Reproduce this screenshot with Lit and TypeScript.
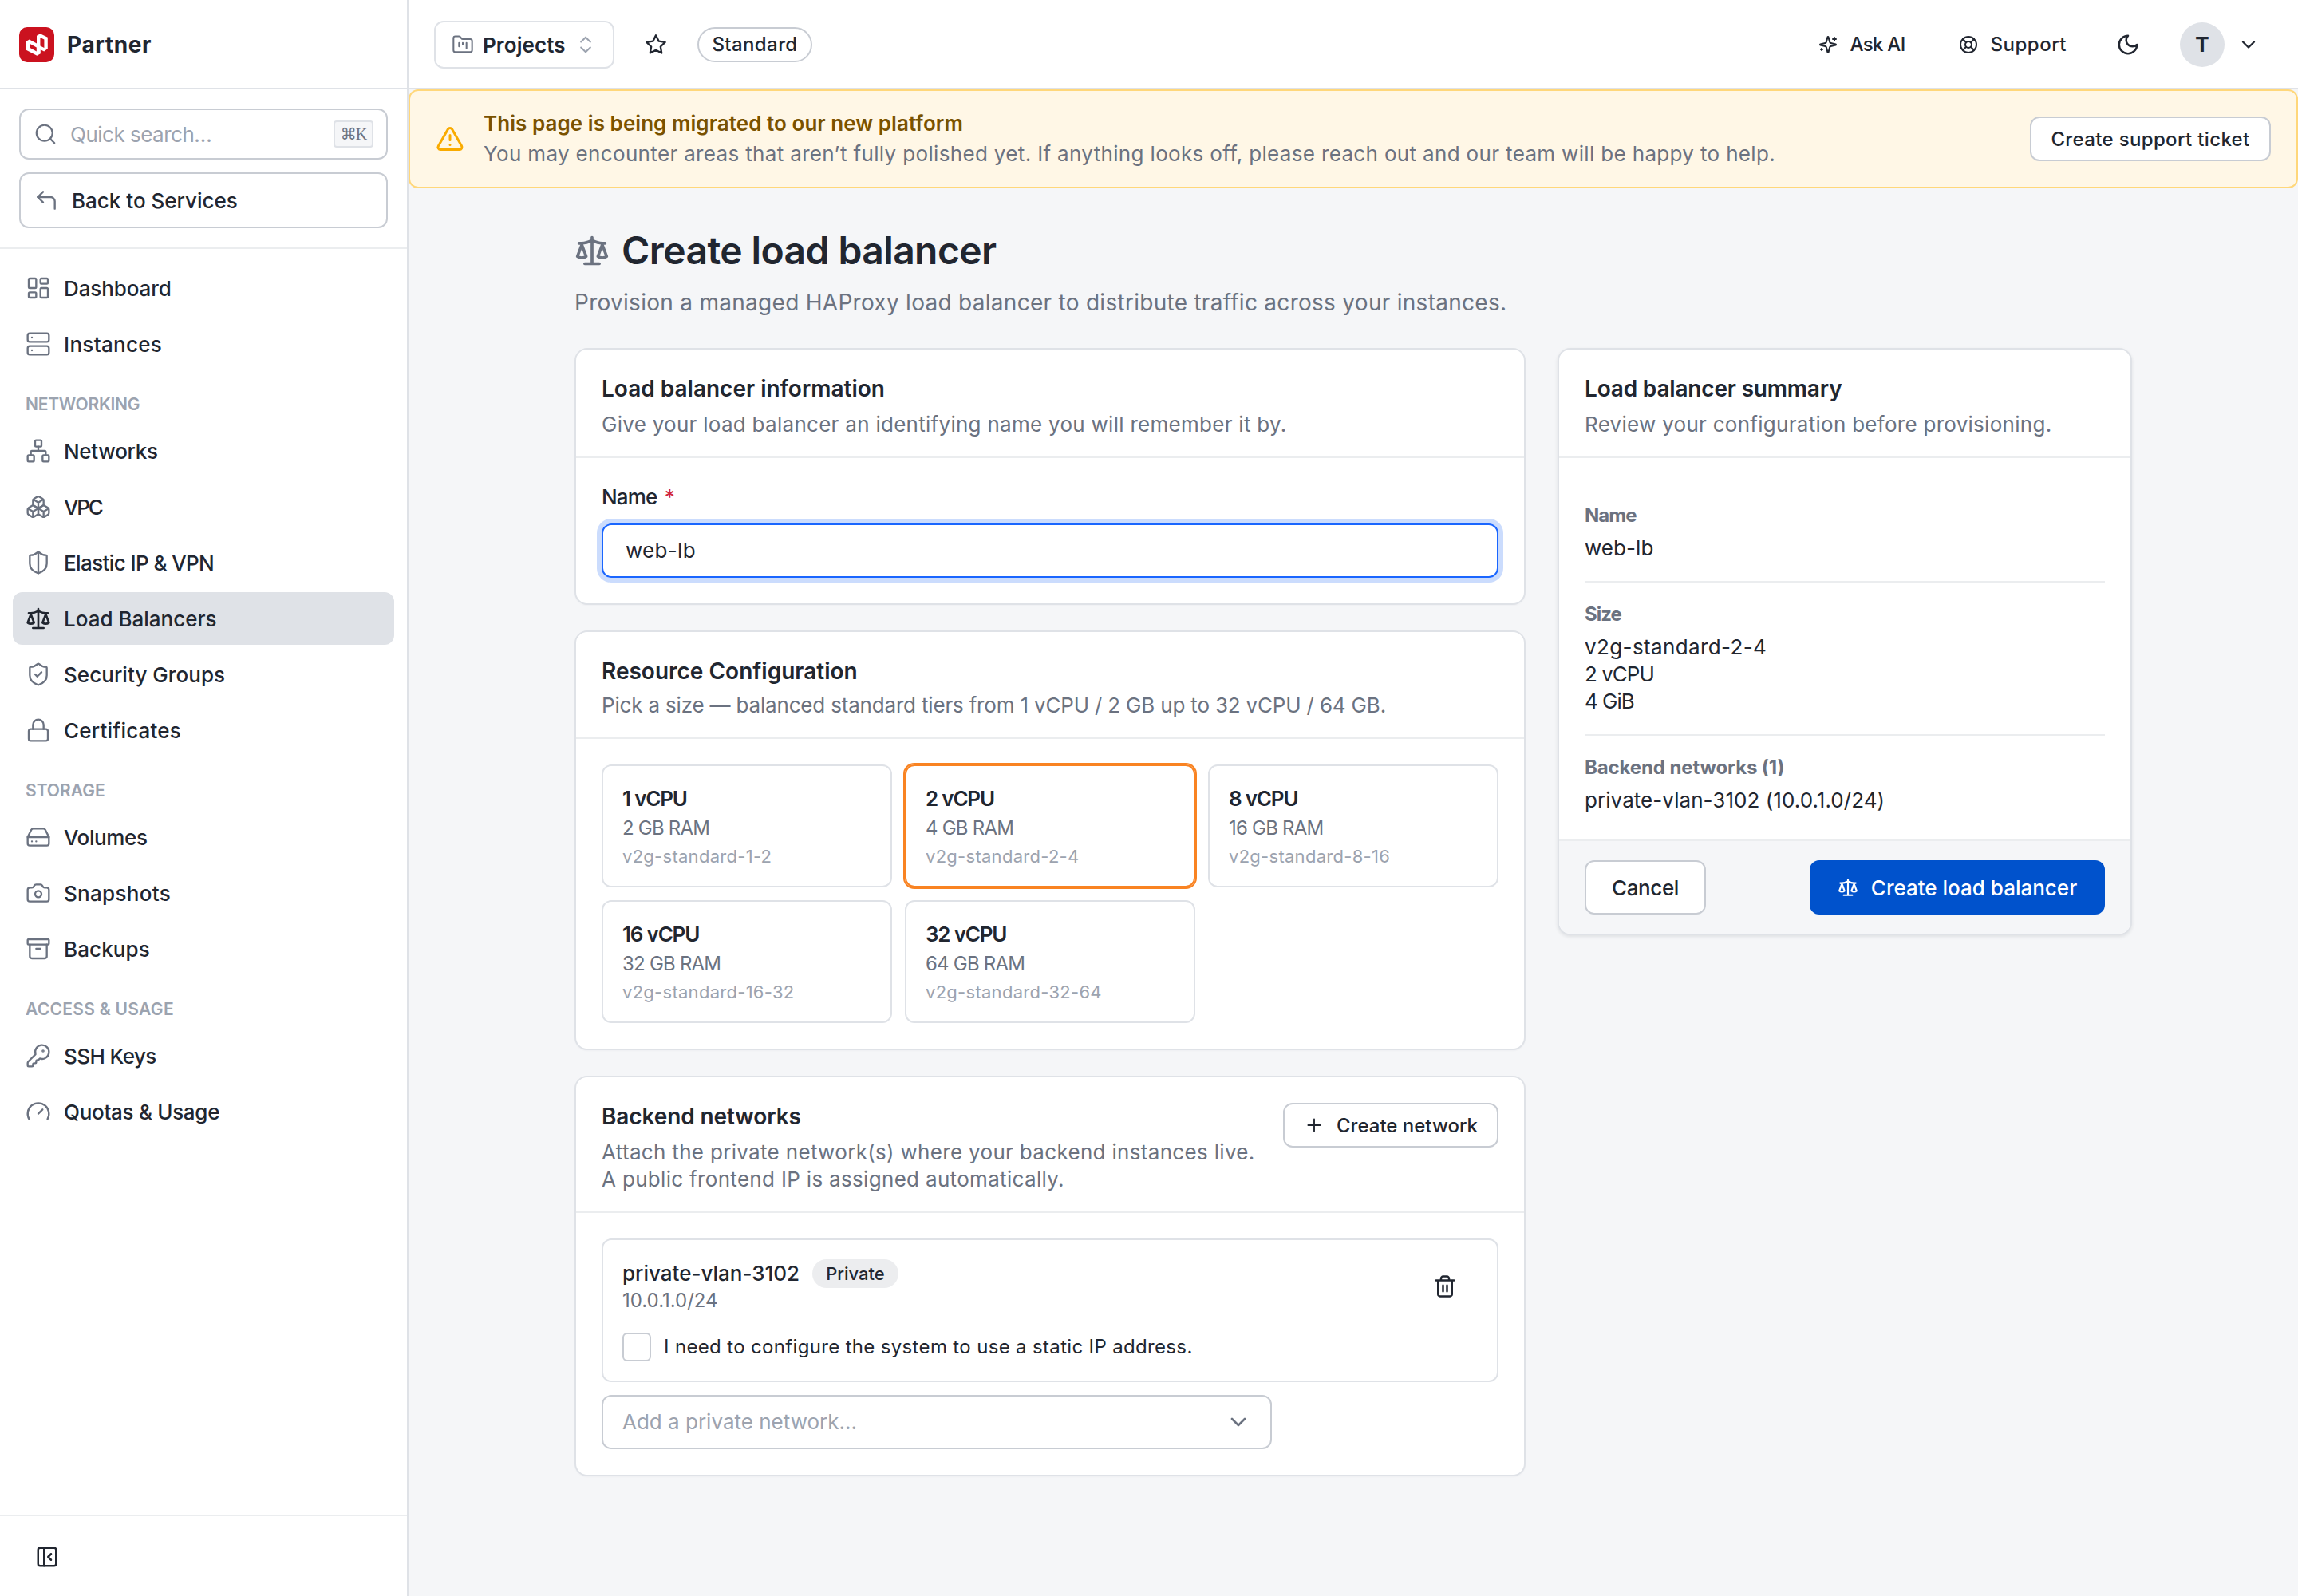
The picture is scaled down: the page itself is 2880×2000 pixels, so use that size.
import { LitElement, css, html, svg, nothing } from "lit";
import { customElement, property, state } from "lit/decorators.js";
import { classMap } from "lit/directives/class-map.js";
import { styleMap } from "lit/directives/style-map.js";

const ICONS = {
  search: svg`<circle cx="11" cy="11" r="8" /><path d="m21 21-4.3-4.3" />`,
  back: svg`<path d="M9 14 4 9l5-5" /><path d="M20 20v-7a4 4 0 0 0-4-4H4" />`,
  dashboard: svg`
    <rect width="7" height="9" x="3" y="3" rx="1" /><rect width="7" height="5" x="14" y="3" rx="1" />
    <rect width="7" height="9" x="14" y="12" rx="1" /><rect width="7" height="5" x="3" y="16" rx="1" />`,
  server: svg`
    <rect width="20" height="8" x="2" y="2" rx="2" /><rect width="20" height="8" x="2" y="14" rx="2" />
    <path d="M6 6h.01M6 18h.01" />`,
  network: svg`
    <rect width="6" height="6" x="16" y="16" rx="1" /><rect width="6" height="6" x="2" y="16" rx="1" />
    <rect width="6" height="6" x="9" y="2" rx="1" />
    <path d="M5 16v-3a1 1 0 0 1 1-1h12a1 1 0 0 1 1 1v3M12 12V8" />`,
  boxes: svg`
    <path d="M2.97 12.92A2 2 0 0 0 2 14.63v3.24a2 2 0 0 0 .97 1.71l3 1.8a2 2 0 0 0 2.06 0L12 19v-5.5l-5-3-4.03 2.42Z" />
    <path d="m7 16.5-4.74-2.85M7 16.5l5-3M7 16.5v5.17" />
    <path d="M12 13.5V19l3.97 2.38a2 2 0 0 0 2.06 0l3-1.8a2 2 0 0 0 .97-1.71v-3.24a2 2 0 0 0-.97-1.71L17 10.5l-5 3Z" />
    <path d="m17 16.5-5-3M17 16.5l4.74-2.85M17 16.5v5.17" />
    <path d="M7.97 4.42A2 2 0 0 0 7 6.13v4.37l5 3 5-3V6.13a2 2 0 0 0-.97-1.71l-3-1.8a2 2 0 0 0-2.06 0l-3 1.8Z" />
    <path d="M12 8 7.26 5.15M12 8l4.74-2.85M12 13.5V8" />`,
  shieldHalf: svg`
    <path d="M20 13c0 5-3.5 7.5-7.66 8.95a1 1 0 0 1-.67-.01C7.5 20.5 4 18 4 13V6a1 1 0 0 1 1-1c2 0 4.5-1.2 6.24-2.72a1.17 1.17 0 0 1 1.52 0C14.51 3.81 17 5 19 5a1 1 0 0 1 1 1z" />
    <path d="M12 22V2" />`,
  shieldCheck: svg`
    <path d="M20 13c0 5-3.5 7.5-7.66 8.95a1 1 0 0 1-.67-.01C7.5 20.5 4 18 4 13V6a1 1 0 0 1 1-1c2 0 4.5-1.2 6.24-2.72a1.17 1.17 0 0 1 1.52 0C14.51 3.81 17 5 19 5a1 1 0 0 1 1 1z" />
    <path d="m9 12 2 2 4-4" />`,
  scale: svg`
    <path d="m16 16 3-8 3 8c-.87.65-1.92 1-3 1s-2.13-.35-3-1Z" />
    <path d="m2 16 3-8 3 8c-.87.65-1.92 1-3 1s-2.13-.35-3-1Z" />
    <path d="M7 21h10M12 3v18M3 7h2c2 0 5-1 7-2 2 1 5 2 7 2h2" />`,
  lock: svg`<rect width="18" height="11" x="3" y="11" rx="2" /><path d="M7 11V7a5 5 0 0 1 10 0v4" />`,
  drive: svg`
    <path d="M22 12H2M6 16h.01M10 16h.01" />
    <path d="M5.45 5.11 2 12v6a2 2 0 0 0 2 2h16a2 2 0 0 0 2-2v-6l-3.45-6.89A2 2 0 0 0 16.76 4H7.24a2 2 0 0 0-1.79 1.11z" />`,
  camera: svg`
    <path d="M13.997 4a2 2 0 0 1 1.76 1.05l.486.9A2 2 0 0 0 18.003 7H20a2 2 0 0 1 2 2v9a2 2 0 0 1-2 2H4a2 2 0 0 1-2-2V9a2 2 0 0 1 2-2h1.997a2 2 0 0 0 1.759-1.048l.489-.904A2 2 0 0 1 10.004 4z" />
    <circle cx="12" cy="13" r="3" />`,
  archive: svg`
    <rect width="20" height="5" x="2" y="3" rx="1" />
    <path d="M4 8v11a2 2 0 0 0 2 2h12a2 2 0 0 0 2-2V8M10 12h4" />`,
  key: svg`
    <path d="M2.586 17.414A2 2 0 0 0 2 18.828V21a1 1 0 0 0 1 1h3a1 1 0 0 0 1-1v-1a1 1 0 0 1 1-1h1a1 1 0 0 0 1-1v-1a1 1 0 0 1 1-1h.172a2 2 0 0 0 1.414-.586l.814-.814a6.5 6.5 0 1 0-4-4z" />
    <circle cx="16.5" cy="7.5" r=".5" fill="currentColor" />`,
  gauge: svg`<path d="m12 14 4-4" /><path d="M3.34 19a10 10 0 1 1 17.32 0" />`,
  panel: svg`<rect width="18" height="18" x="3" y="3" rx="2" /><path d="M9 3v18M16 15l-3-3 3-3" />`,
  kanban: svg`
    <path d="M4 20h16a2 2 0 0 0 2-2V8a2 2 0 0 0-2-2h-7.93a2 2 0 0 1-1.66-.9l-.82-1.2A2 2 0 0 0 7.93 3H4a2 2 0 0 0-2 2v13c0 1.1.9 2 2 2Z" />
    <path d="M8 10v4M12 10v2M16 10v6" />`,
  chevrons: svg`<path d="m7 15 5 5 5-5M7 9l5-5 5 5" />`,
  chevronDown: svg`<path d="m6 9 6 6 6-6" />`,
  star: svg`<path d="m12 2 3.09 6.26L22 9.27l-5 4.87 1.18 6.88L12 17.77l-6.18 3.25L7 14.14 2 9.27l6.91-1.01z" />`,
  sparkles: svg`
    <path d="M9.937 15.5A2 2 0 0 0 8.5 14.063l-6.135-1.582a.5.5 0 0 1 0-.962L8.5 9.936A2 2 0 0 0 9.937 8.5l1.582-6.135a.5.5 0 0 1 .963 0L14.063 8.5A2 2 0 0 0 15.5 9.937l6.135 1.581a.5.5 0 0 1 0 .964L15.5 14.063a2 2 0 0 0-1.437 1.437l-1.582 6.135a.5.5 0 0 1-.963 0z" />
    <path d="M20 3v4M22 5h-4M4 17v2M5 18H3" />`,
  buoy: svg`
    <circle cx="12" cy="12" r="10" /><circle cx="12" cy="12" r="4" />
    <path d="m4.93 4.93 4.24 4.24M14.83 9.17l4.24-4.24M14.83 14.83l4.24 4.24M9.17 14.83l-4.24 4.24" />`,
  moon: svg`<path d="M12 3a6 6 0 0 0 9 9 9 9 0 1 1-9-9Z" />`,
  alert: svg`
    <path d="m21.73 18-8-14a2 2 0 0 0-3.48 0l-8 14A2 2 0 0 0 4 21h16a2 2 0 0 0 1.73-3" />
    <path d="M12 9v4M12 17h.01" />`,
  plus: svg`<path d="M5 12h14M12 5v14" />`,
  trash: svg`
    <path d="M3 6h18M19 6v14c0 1-1 2-2 2H7c-1 0-2-1-2-2V6M8 6V4c0-1 1-2 2-2h4c1 0 2 1 2 2v2" />
    <path d="M10 11v6M14 11v6" />`,
};

type IconName = keyof typeof ICONS;

@customElement("ui-icon")
export class UiIcon extends LitElement {
  @property() name: IconName = "search";
  @property({ type: Number }) size = 32;
  @property({ type: Number }) stroke = 1.75;

  render() {
    return html`
      <svg
        width=${this.size}
        height=${this.size}
        viewBox="0 0 24 24"
        fill="none"
        stroke="currentColor"
        stroke-width=${this.stroke}
        stroke-linecap="round"
        stroke-linejoin="round"
      >
        ${ICONS[this.name]}
      </svg>
    `;
  }

  static styles = css`
    :host {
      display: inline-flex;
      flex: none;
    }
  `;
}

interface NavItem {
  icon: IconName;
  label: string;
  tracking?: number;
}

interface NavGroup {
  title?: string;
  tracking?: number;
  items: NavItem[];
}

const NAV: NavGroup[] = [
  {
    items: [
      { icon: "dashboard", label: "Dashboard", tracking: -0.1 },
      { icon: "server", label: "Instances", tracking: 0.3 },
    ],
  },
  {
    title: "Networking",
    tracking: -0.25,
    items: [
      { icon: "network", label: "Networks", tracking: -0.3 },
      { icon: "boxes", label: "VPC", tracking: -2.2 },
      { icon: "shieldHalf", label: "Elastic IP & VPN", tracking: -0.6 },
      { icon: "scale", label: "Load Balancers" },
      { icon: "shieldCheck", label: "Security Groups", tracking: 0.05 },
      { icon: "lock", label: "Certificates", tracking: 0.2 },
    ],
  },
  {
    title: "Storage",
    items: [
      { icon: "drive", label: "Volumes", tracking: -0.4 },
      { icon: "camera", label: "Snapshots", tracking: 0.3 },
      { icon: "archive", label: "Backups", tracking: 0.1 },
    ],
  },
  {
    title: "Access & Usage",
    tracking: 0.3,
    items: [
      { icon: "key", label: "SSH Keys", tracking: -0.6 },
      { icon: "gauge", label: "Quotas & Usage", tracking: -0.3 },
    ],
  },
];

const SIZES = [
  { cpu: 1, ram: 2 },
  { cpu: 2, ram: 4 },
  { cpu: 8, ram: 16 },
  { cpu: 16, ram: 32 },
  { cpu: 32, ram: 64 },
];

const spacing = (px = 0) => styleMap({ letterSpacing: `${px}px` });

@customElement("app-sidebar")
export class AppSidebar extends LitElement {
  @property() active = "";

  renderItem(item: NavItem) {
    const active = item.label === this.active;
    return html`
      <a class=${classMap({ item: true, active })}>
        <ui-icon name=${item.icon} stroke=${active ? 2 : 1.75}></ui-icon>
        <span style=${spacing(item.tracking)}>${item.label}</span>
      </a>
    `;
  }

  render() {
    return html`
      <div class="brand">
        <svg class="logo" width="44" height="44" viewBox="0 0 44 44">
          <rect width="44" height="44" rx="10" fill="#cb121f" />
          <path
            fill="#fff"
            fill-rule="evenodd"
            d="M26.4 8.2 35.8 12.8V27l-4.6 3.4-4.4-2.2v5l-4.5 2.6-13.5-7V17.8l4-2.4 9.2 5V10.8zM26.4 13v10.4l5 2.5V15.6zM13.2 20.8v5l8.6 4.8v-5z"
          />
        </svg>
        <span>Partner</span>
      </div>
      <div class="tools">
        <div class="search">
          <ui-icon name="search" size="30"></ui-icon>
          <span class="placeholder">Quick search…</span>
          <kbd>⌘K</kbd>
        </div>
        <a class="back">
          <ui-icon name="back"></ui-icon>
          <span>Back to Services</span>
        </a>
      </div>
      <nav>
        ${NAV.map(
          (group) => html`
            ${group.title
              ? html`<div class="heading" style=${spacing(group.tracking)}>${group.title}</div>`
              : nothing}
            ${group.items.map((item) => this.renderItem(item))}
          `
        )}
      </nav>
      <footer><ui-icon name="panel" size="30" stroke="2"></ui-icon></footer>
    `;
  }

  static styles = css`
    :host {
      display: flex;
      flex-direction: column;
      box-sizing: border-box;
      width: 512px;
      flex: none;
      background: #fff;
      border-right: 2px solid #dfe2e7;
      font-size: 26px;
      font-weight: 500;
    }

    .brand {
      display: flex;
      align-items: center;
      gap: 16px;
      height: 108px;
      padding: 2px 0 0 24px;
      border-bottom: 2px solid #dfe2e7;
      font-size: 28px;
      font-weight: 700;
      letter-spacing: 0.6px;
    }

    .tools {
      display: flex;
      flex-direction: column;
      gap: 16px;
      padding: 24px;
      border-bottom: 2px solid #ebedef;
    }

    .search,
    .back {
      display: flex;
      align-items: center;
      box-sizing: border-box;
      border: 2px solid #c8ccd3;
      border-radius: 12px;
      padding: 0 16px;
    }

    .search {
      height: 64px;
      gap: 16px;
    }

    .back {
      height: 70px;
      gap: 16px;
    }

    .placeholder {
      flex: 1;
      padding-top: 2px;
      color: #9ca3af;
      font-weight: 400;
      letter-spacing: -0.5px;
    }

    kbd {
      display: flex;
      align-items: center;
      justify-content: center;
      box-sizing: border-box;
      width: 50px;
      height: 34px;
      border: 2px solid #dfe2e7;
      border-radius: 4px;
      background: #f5f6f8;
      color: #6b7280;
      font: 20px "Liberation Serif", "DejaVu Sans", serif;
      letter-spacing: -1px;
    }

    ui-icon {
      color: #6b7280;
    }

    nav {
      display: flex;
      flex-direction: column;
      gap: 4px;
      padding: 16px;
      flex: 1;
    }

    .item {
      display: flex;
      align-items: center;
      gap: 16px;
      height: 66px;
      padding-left: 16px;
      border-radius: 12px;
    }

    .item span,
    .back span {
      padding-top: 1px;
    }

    .active {
      background: #dfe2e7;
    }

    .active ui-icon,
    footer ui-icon {
      color: #212630;
    }

    .heading {
      height: 60px;
      line-height: 78px;
      padding-left: 16px;
      color: #9ca3af;
      font-size: 21px;
      font-weight: 600;
      text-transform: uppercase;
    }

    footer {
      display: flex;
      align-items: center;
      box-sizing: border-box;
      height: 102px;
      padding: 2px 0 0 44px;
      border-top: 2px solid #ebedef;
    }
  `;
}

@customElement("app-topbar")
export class AppTopbar extends LitElement {
  render() {
    return html`
      <button class="projects">
        <ui-icon name="kanban" size="28"></ui-icon>
        <span>Projects</span>
        <ui-icon class="light" name="chevrons" size="28"></ui-icon>
      </button>
      <ui-icon name="star" size="28" stroke="2"></ui-icon>
      <span class="plan">Standard</span>
      <div class="actions">
        <a class="link ask"><ui-icon name="sparkles" size="24" stroke="2"></ui-icon>Ask AI</a>
        <a class="link support"><ui-icon name="buoy" size="24" stroke="2"></ui-icon>Support</a>
        <ui-icon name="moon" size="30" stroke="2"></ui-icon>
        <span class="avatar">T</span>
        <ui-icon name="chevronDown" size="28" stroke="2"></ui-icon>
      </div>
    `;
  }

  static styles = css`
    :host {
      display: flex;
      align-items: center;
      gap: 38px;
      height: 112px;
      padding: 2px 48px 0 32px;
      border-bottom: 2px solid #dfe2e7;
      background: #fff;
      font-size: 24px;
      font-weight: 500;
    }

    .projects {
      display: flex;
      align-items: center;
      box-sizing: border-box;
      gap: 11px;
      width: 226px;
      height: 60px;
      padding: 0 19px 0 20px;
      border: 2px solid #dfe2e7;
      border-radius: 12px;
      background: #fff;
      color: inherit;
      font: 600 26px Inter, sans-serif;
      letter-spacing: 0.1px;
    }

    .projects ui-icon {
      color: #6b7280;
    }

    .projects .light {
      color: #9ca3af;
    }

    .plan {
      box-sizing: border-box;
      width: 144px;
      height: 44px;
      border: 2px solid #c8ccd3;
      border-radius: 22px;
      line-height: 40px;
      text-align: center;
      letter-spacing: 0.4px;
    }

    .actions {
      display: flex;
      align-items: center;
      margin-left: auto;
    }

    .link {
      display: flex;
      align-items: center;
      gap: 16px;
    }

    .ask {
      margin-right: 67px;
      letter-spacing: -0.7px;
    }

    .support {
      margin-right: 62px;
      letter-spacing: 0.5px;
    }

    .avatar {
      width: 56px;
      margin: 0 16px 0 50px;
      border-radius: 50%;
      background: #dfe2e7;
      font-size: 26px;
      font-weight: 700;
      line-height: 56px;
      text-align: center;
    }
  `;
}

@customElement("app-root")
export class AppRoot extends LitElement {
  @state() private selected = 2;
  @state() private name = "web-lb";

  renderBanner() {
    return html`
      <section class="banner">
        <ui-icon name="alert" size="36" stroke="2"></ui-icon>
        <div class="banner-text">
          <strong>This page is being migrated to our new platform</strong>
          <span>
            You may encounter areas that aren’t fully polished yet. If anything looks off, please
            reach out and our team will be happy to help.
          </span>
        </div>
        <button class="btn small ticket">Create support ticket</button>
      </section>
    `;
  }

  renderInfo() {
    return html`
      <section class="card">
        <header>
          <h2>Load balancer information</h2>
          <p>Give your load balancer an identifying name you will remember it by.</p>
        </header>
        <div class="body">
          <label>Name<span class="required">*</span></label>
          <div class="input">${this.name}</div>
        </div>
      </section>
    `;
  }

  renderSizes() {
    return html`
      <section class="card resources">
        <header>
          <h2>Resource Configuration</h2>
          <p>Pick a size — balanced standard tiers from 1 vCPU / 2 GB up to 32 vCPU / 64 GB.</p>
        </header>
        <div class="body tiles">
          ${SIZES.map(
            ({ cpu, ram }) => html`
              <div
                class=${classMap({ tile: true, selected: cpu === this.selected })}
                @click=${() => (this.selected = cpu)}
              >
                <b>${cpu} vCPU</b>
                <span class="ram">${ram} GB RAM</span>
                <span class="sku">v2g-standard-${cpu}-${ram}</span>
              </div>
            `
          )}
        </div>
      </section>
    `;
  }

  renderNetworks() {
    return html`
      <section class="card networks">
        <header>
          <div>
            <h2>Backend networks</h2>
            <p>
              Attach the private network(s) where your backend instances live.<br />A public
              frontend IP is assigned automatically.
            </p>
          </div>
          <button class="btn small add">
            <ui-icon name="plus" size="26"></ui-icon>Create network
          </button>
        </header>
        <div class="body">
          <div class="network">
            <div class="network-row">
              <div>
                <div class="network-name">
                  private-vlan-3102 <span class="badge">Private</span>
                </div>
                <div class="cidr">10.0.1.0/24</div>
              </div>
              <span class="remove"><ui-icon name="trash" size="30" stroke="2"></ui-icon></span>
            </div>
            <div class="check">
              <span class="box"></span>
              <span>I need to configure the system to use a static IP address.</span>
            </div>
          </div>
          <div class="select">
            <span>Add a private network…</span>
            <ui-icon name="chevronDown" size="32" stroke="2"></ui-icon>
          </div>
        </div>
      </section>
    `;
  }

  renderSummary() {
    const size = SIZES.find(({ cpu }) => cpu === this.selected)!;
    return html`
      <aside class="card summary">
        <header>
          <h2>Load balancer summary</h2>
          <p>Review your configuration before provisioning.</p>
        </header>
        <dl>
          <div class="entry">
            <dt class="narrow">Name</dt>
            <dd>${this.name}</dd>
          </div>
          <div class="entry">
            <dt class="narrow">Size</dt>
            <dd class="wide">v2g-standard-${size.cpu}-${size.ram}</dd>
            <dd class="narrow">${size.cpu} vCPU</dd>
            <dd class="narrow">${size.ram} GiB</dd>
          </div>
          <div class="entry">
            <dt>Backend networks (1)</dt>
            <dd>private-vlan-3102 (10.0.1.0/24)</dd>
          </div>
        </dl>
        <footer>
          <button class="btn cancel">Cancel</button>
          <button class="btn primary">
            <ui-icon name="scale" size="26" stroke="2"></ui-icon>Create load balancer
          </button>
        </footer>
      </aside>
    `;
  }

  render() {
    return html`
      <app-sidebar active="Load Balancers"></app-sidebar>
      <div class="page">
        <app-topbar></app-topbar>
        ${this.renderBanner()}
        <main>
          <h1><ui-icon name="scale" size="44" stroke="2"></ui-icon>Create load balancer</h1>
          <p class="lead">
            Provision a managed HAProxy load balancer to distribute traffic across your instances.
          </p>
          <div class="columns">
            <div class="form">
              ${this.renderInfo()} ${this.renderSizes()} ${this.renderNetworks()}
            </div>
            ${this.renderSummary()}
          </div>
        </main>
      </div>
    `;
  }

  static styles = css`
    :host {
      display: flex;
      height: 2000px;
      overflow: hidden;
      background: #f5f6f8;
      color: #212630;
      font-family: Inter, "Open Sans", sans-serif;
      font-size: 26px;
      line-height: 34px;
    }

    * {
      box-sizing: border-box;
    }

    h1,
    h2,
    p,
    dl,
    dd {
      margin: 0;
    }

    .page {
      flex: 1;
      min-width: 0;
    }

    .btn {
      display: flex;
      align-items: center;
      justify-content: center;
      height: 68px;
      padding: 0;
      border: 2px solid #c8ccd3;
      border-radius: 12px;
      background: #fff;
      color: inherit;
      font: 500 26px Inter, sans-serif;
    }

    .small {
      height: 56px;
      font-size: 24px;
      flex: none;
    }

    .banner {
      display: flex;
      align-items: center;
      height: 124px;
      padding: 0 32px;
      border: 2px solid #ffd77a;
      border-radius: 12px;
      background: #fff7e6;
    }

    .banner ui-icon {
      margin-right: 24px;
      color: #f9ab00;
    }

    .banner-text {
      display: flex;
      flex-direction: column;
      flex: 1;
      color: #6b7280;
      line-height: 38px;
      letter-spacing: 0.34px;
    }

    .banner-text strong {
      color: #7a5200;
      font-weight: 600;
      letter-spacing: 0.05px;
    }

    .ticket {
      width: 302px;
      letter-spacing: 0.35px;
    }

    main {
      width: 1952px;
      margin: 0 auto;
      padding-top: 48px;
    }

    h1 {
      display: flex;
      align-items: center;
      gap: 15px;
      font-size: 48px;
      font-weight: 600;
      line-height: 60px;
      letter-spacing: -0.6px;
    }

    h1 ui-icon {
      color: #6b7280;
    }

    .lead {
      margin: 15px 0 37px;
      color: #6b7280;
      font-size: 28px;
      line-height: 40px;
      letter-spacing: 0.28px;
    }

    .columns {
      display: flex;
      align-items: flex-start;
      gap: 40px;
    }

    .form {
      display: flex;
      flex-direction: column;
      gap: 32px;
      width: 1192px;
    }

    .card {
      border: 2px solid #dfe2e7;
      border-radius: 16px;
      background: #fff;
      box-shadow: 0 1px 2px rgba(33, 38, 48, 0.03);
    }

    .card header {
      padding: 32px 32px 23px;
      border-bottom: 2px solid #ebedef;
    }

    .card h2 {
      margin-bottom: 11px;
      font-size: 28px;
      font-weight: 600;
      line-height: 34px;
    }

    .card p {
      color: #6b7280;
      letter-spacing: 0.28px;
    }

    .body {
      display: flex;
      flex-direction: column;
      gap: 16px;
      padding: 32px;
    }

    label {
      font-weight: 500;
      letter-spacing: -0.8px;
    }

    .required {
      margin-left: 9px;
      color: #d0263c;
    }

    .input {
      height: 68px;
      padding: 0 28px;
      border: 2px solid #1a66ff;
      border-radius: 12px;
      box-shadow: 0 0 0 6px #cbdcfd;
      line-height: 64px;
      letter-spacing: 0.3px;
    }

    .resources h2 {
      margin-bottom: 9px;
    }

    .resources p {
      letter-spacing: -0.18px;
    }

    .tiles {
      display: grid;
      grid-template-columns: repeat(3, 1fr);
    }

    .tile {
      display: flex;
      flex-direction: column;
      height: 154px;
      padding: 24px;
      border: 2px solid #dfe2e7;
      border-radius: 12px;
    }

    .tile b {
      font-weight: 600;
      letter-spacing: -1.2px;
    }

    .ram {
      margin-top: 2px;
      color: #6b7280;
      font-size: 24px;
      line-height: 36px;
      letter-spacing: -0.78px;
    }

    .sku {
      color: #9ca3af;
      font-size: 22px;
      letter-spacing: 0.28px;
    }

    .selected {
      border-color: #f98322;
      box-shadow: 0 0 0 2px #f98322;
    }

    .networks header {
      display: flex;
      align-items: flex-start;
      justify-content: space-between;
    }

    .networks h2 {
      letter-spacing: -0.1px;
    }

    .networks p {
      letter-spacing: 0.32px;
    }

    .add {
      gap: 15px;
      width: 270px;
    }

    .network {
      height: 180px;
      padding: 24px;
      border: 2px solid #dfe2e7;
      border-radius: 12px;
    }

    .network-row {
      display: flex;
      justify-content: space-between;
      height: 68px;
    }

    .network-name {
      display: flex;
      align-items: center;
      gap: 16px;
      height: 36px;
      font-weight: 500;
    }

    .badge {
      padding: 0 17px;
      border-radius: 18px;
      background: #ecedef;
      font-size: 22px;
      line-height: 36px;
    }

    .cidr {
      color: #6b7280;
      font-size: 24px;
      line-height: 32px;
    }

    .remove {
      display: flex;
      align-items: center;
      justify-content: center;
      width: 82px;
    }

    .check {
      display: flex;
      align-items: center;
      gap: 16px;
      margin-top: 24px;
      font-size: 24px;
      line-height: 36px;
      letter-spacing: 0.34px;
    }

    .box {
      width: 36px;
      height: 36px;
      border: 2px solid #c8ccd3;
      border-radius: 6px;
    }

    .select {
      display: flex;
      align-items: center;
      justify-content: space-between;
      width: 840px;
      height: 68px;
      padding: 0 24px;
      border: 2px solid #c8ccd3;
      border-radius: 12px;
      color: #9ca3af;
    }

    .select ui-icon {
      color: #6b7280;
    }

    .summary {
      width: 720px;
      box-shadow: 0 2px 4px rgba(33, 38, 48, 0.1);
      overflow: hidden;
    }

    .summary h2 {
      letter-spacing: -0.18px;
    }

    dl {
      padding: 32px;
    }

    .entry {
      padding: 24px 0;
      border-bottom: 2px solid #ebedef;
    }

    .entry:last-child {
      padding-bottom: 0;
      border: 0;
    }

    dt {
      margin-bottom: 8px;
      color: #6b7280;
      font-size: 24px;
      font-weight: 700;
      line-height: 32px;
      letter-spacing: -0.12px;
    }

    dd {
      letter-spacing: 0.06px;
    }

    .narrow {
      letter-spacing: -1px;
    }

    .wide {
      letter-spacing: 0.38px;
    }

    .summary footer {
      display: flex;
      justify-content: space-between;
      padding: 24px 32px;
      border-top: 2px solid #ebedef;
      background: #f5f6f8;
    }

    .cancel {
      width: 152px;
      letter-spacing: -0.4px;
    }

    .primary {
      gap: 16px;
      width: 370px;
      border-color: #0052cc;
      background: #0052cc;
      color: #fff;
    }
  `;
}
